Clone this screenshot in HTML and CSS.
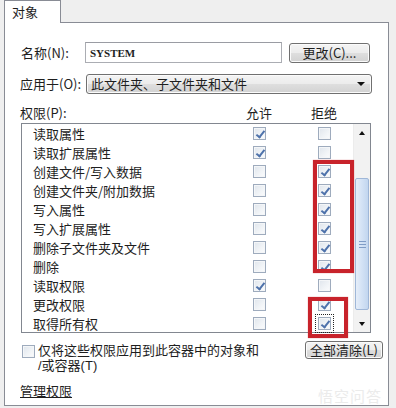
FILE: index.html
```html
<!DOCTYPE html>
<html lang="zh-CN">
<head>
    <meta charset="UTF-8">
    <meta name="viewport" content="width=device-width, initial-scale=1.0">
    <title>对象</title>
    <link rel="stylesheet" href="styles.css">
</head>
<body>
    <div class="tabs">
        <div class="tab">对象</div>
    </div>
    <div class="panel">
        <div class="row-name">
            <span class="label label-name">名称(N):</span>
            <div class="textbox">SYSTEM</div>
            <div class="btn btn-change">更改(C)...</div>
        </div>
        <div class="row-apply">
            <span class="label label-apply">应用于(O):</span>
            <div class="select">
                <span>此文件夹、子文件夹和文件</span>
                <span class="caret"></span>
            </div>
        </div>
        <div class="perm-head">
            <span>权限(P):</span>
            <span class="col">允许</span>
            <span class="col col-deny">拒绝</span>
        </div>
        <div class="perm-list">
            <div class="rows">
                <div class="row"><span class="name">读取属性</span><span class="cell"><i class="cb on"></i></span><span class="cell"><i class="cb"></i></span></div>
                <div class="row"><span class="name">读取扩展属性</span><span class="cell"><i class="cb on"></i></span><span class="cell"><i class="cb"></i></span></div>
                <div class="row"><span class="name">创建文件/写入数据</span><span class="cell"><i class="cb"></i></span><span class="cell"><i class="cb on"></i></span></div>
                <div class="row"><span class="name">创建文件夹/附加数据</span><span class="cell"><i class="cb"></i></span><span class="cell"><i class="cb on"></i></span></div>
                <div class="row"><span class="name">写入属性</span><span class="cell"><i class="cb"></i></span><span class="cell"><i class="cb on"></i></span></div>
                <div class="row"><span class="name">写入扩展属性</span><span class="cell"><i class="cb"></i></span><span class="cell"><i class="cb on"></i></span></div>
                <div class="row"><span class="name">删除子文件夹及文件</span><span class="cell"><i class="cb"></i></span><span class="cell"><i class="cb on"></i></span></div>
                <div class="row"><span class="name">删除</span><span class="cell"><i class="cb"></i></span><span class="cell"><i class="cb on"></i></span></div>
                <div class="row"><span class="name">读取权限</span><span class="cell"><i class="cb on"></i></span><span class="cell"><i class="cb"></i></span></div>
                <div class="row"><span class="name">更改权限</span><span class="cell"><i class="cb"></i></span><span class="cell"><i class="cb on"></i></span></div>
                <div class="row"><span class="name">取得所有权</span><span class="cell"><i class="cb"></i></span><span class="cell"><i class="cb on focus"></i></span></div>
            </div>
            <div class="scrollbar">
                <div class="sb-btn"><span class="arrow-up"></span></div>
                <div class="sb-track">
                    <div class="sb-thumb"><span class="grip"></span></div>
                </div>
                <div class="sb-btn"><span class="arrow-down"></span></div>
            </div>
            <!-- 红框标注 -->
            <div class="mark mark-a"></div>
            <div class="mark mark-b"></div>
        </div>
        <div class="bottom">
            <div class="apply-only">
                <i class="cb big"></i>
                <span class="apply-text">
                    <span class="line">仅将这些权限应用到此容器中的对象和</span>
                    <span class="line">/或容器(T)</span>
                </span>
            </div>
            <div class="btn btn-clear">全部清除(L)</div>
        </div>
        <a class="manage" href="#">管理权限</a>
        <div class="watermark">悟空问答</div>
    </div>
</body>
</html>
```

FILE: styles.css
```css
* {
    margin: 0;
    padding: 0;
    box-sizing: border-box;
}
body {
    width: 396px;
    height: 408px;
    overflow: hidden;
    background-color: #efefef;
    font-family: "Noto Sans CJK SC", "Liberation Sans", sans-serif;
    font-size: 13px;
    color: #1e1e1e;
    line-height: 14px;
}
.tabs {
    height: 22px;
    padding-left: 4px;
}
.tab {
    position: relative;
    z-index: 1;
    width: 57px;
    height: 23px;
    background-color: #ffffff;
    border: 1px solid #898c95;
    border-bottom: none;
    padding: 4px 0 0 7px;
}
.panel {
    position: relative;
    margin-left: 4px;
    width: 385px;
    height: 384px;
    background-color: #ffffff;
    border: 1px solid #898c95;
    padding: 19px 0 0 15px;
}
.row-name, .row-apply {
    display: flex;
    align-items: center;
}
.row-name {
    height: 21px;
}
.row-apply {
    height: 20px;
    margin-top: 11px;
}
.label-name {
    width: 65px;
    padding-left: 1px;
}
.label-apply {
    width: 66px;
}
.textbox {
    width: 197px;
    height: 21px;
    border: 1px solid #abadb3;
    border-top-color: #9a9ca3;
    padding: 3px 0 0 4px;
    font-family: "Liberation Serif", serif;
    font-size: 11px;
    font-weight: bold;
}
.btn {
    display: flex;
    align-items: center;
    justify-content: center;
    border: 1px solid #707070;
    border-radius: 3px;
    background: linear-gradient(#f4f4f4 0%, #ececec 48%, #dedede 52%, #d2d2d2 100%);
    box-shadow: inset 0 0 0 1px #fbfbfb;
}
.btn-change {
    width: 81px;
    height: 20px;
    margin-left: 7px;
}
.select {
    width: 286px;
    height: 20px;
    display: flex;
    align-items: center;
    justify-content: space-between;
    padding: 0 6px 0 4px;
    border: 1px solid #707070;
    border-radius: 3px;
    background: linear-gradient(#f4f4f4 0%, #ececec 48%, #dedede 52%, #d2d2d2 100%);
    box-shadow: inset 0 0 0 1px #fbfbfb;
}
.caret {
    width: 0;
    height: 0;
    border-left: 4px solid transparent;
    border-right: 4px solid transparent;
    border-top: 4px solid #111111;
}
.perm-head {
    display: grid;
    grid-template-columns: 219px 40px 65px;
    height: 14px;
    margin-top: 12px;
}
.perm-head .col {
    text-align: center;
}
.perm-head .col-deny {
    padding-left: 25px;
}
.perm-list {
    position: relative;
    display: flex;
    width: 350px;
    height: 210px;
    margin: 3px 0 0 1px;
    border: 1px solid #828790;
}
.rows {
    flex: 1;
}
.row {
    display: grid;
    grid-template-columns: 217px 40px 65px;
    align-items: center;
    height: 19px;
}
.name {
    padding-left: 11px;
}
.cell {
    display: flex;
    justify-content: center;
}
.cell:last-child {
    padding-left: 25px;
}
.cb {
    position: relative;
    display: block;
    width: 13px;
    height: 13px;
    border: 1px solid #9eabbd;
    background: linear-gradient(135deg, #dfe5ec 0%, #f1f4f7 60%, #fbfcfd 100%);
    box-shadow: inset 0 0 0 1px #f4f6f8;
}
.cb.on::after {
    content: "";
    position: absolute;
    left: 4px;
    top: 1px;
    width: 3px;
    height: 7px;
    border: solid #4e72ab;
    border-width: 0 2px 2px 0;
    transform: rotate(38deg);
}
.cb.focus {
    outline: 1px dotted #222222;
    outline-offset: 2px;
}
.scrollbar {
    width: 17px;
    display: flex;
    flex-direction: column;
    background-color: #f2f2f2;
    border-left: 1px solid #ececec;
}
.sb-btn {
    height: 17px;
    display: flex;
    align-items: center;
    justify-content: center;
}
.arrow-up {
    border-left: 3.5px solid transparent;
    border-right: 3.5px solid transparent;
    border-bottom: 4px solid #111111;
}
.arrow-down {
    border-left: 3.5px solid transparent;
    border-right: 3.5px solid transparent;
    border-top: 4px solid #111111;
}
.sb-track {
    flex: 1;
}
.sb-thumb {
    display: flex;
    align-items: center;
    justify-content: center;
    width: 14px;
    height: 132px;
    margin: 37px 0 0 1px;
    border: 1px solid #9fb7d8;
    border-radius: 2px;
    background: linear-gradient(to right, #e6eef9, #d3e2f5 50%, #c2d6ef);
}
.grip {
    width: 7px;
    height: 7px;
    background: linear-gradient(#7f9cc6 0 1px, transparent 1px 3px, #7f9cc6 3px 4px, transparent 4px 6px, #7f9cc6 6px 7px);
}
.mark {
    position: absolute;
    border: 4px solid #c8232b;
    box-shadow: 0 0 1px rgba(200, 35, 43, 0.6);
}
.mark-a {
    left: 291px;
    top: 36px;
    width: 41px;
    height: 113px;
}
.mark-b {
    left: 286px;
    top: 173px;
    width: 40px;
    height: 41px;
}
.bottom {
    display: flex;
    align-items: flex-start;
    margin-top: 8px;
    height: 30px;
}
.apply-only {
    display: flex;
    align-items: flex-start;
    padding: 3px 0 0 2px;
}
.cb.big {
    margin-top: 1px;
    width: 13px;
    height: 13px;
}
.apply-text {
    display: flex;
    flex-direction: column;
    margin-left: 3px;
    margin-top: -1px;
    font-family: "Liberation Sans", "Noto Sans CJK SC", sans-serif;
}
.line {
    display: block;
    line-height: 15px;
    height: 15px;
}
.btn-clear {
    width: 78px;
    height: 18px;
    margin-left: auto;
    margin-right: 5px;
}
.manage {
    display: inline-block;
    margin-top: 13px;
    color: #1e1e1e;
    text-decoration: underline;
}
.watermark {
    position: absolute;
    right: 6px;
    bottom: 2px;
    font-size: 15px;
    color: #ebebeb;
    letter-spacing: 1px;
}
```
